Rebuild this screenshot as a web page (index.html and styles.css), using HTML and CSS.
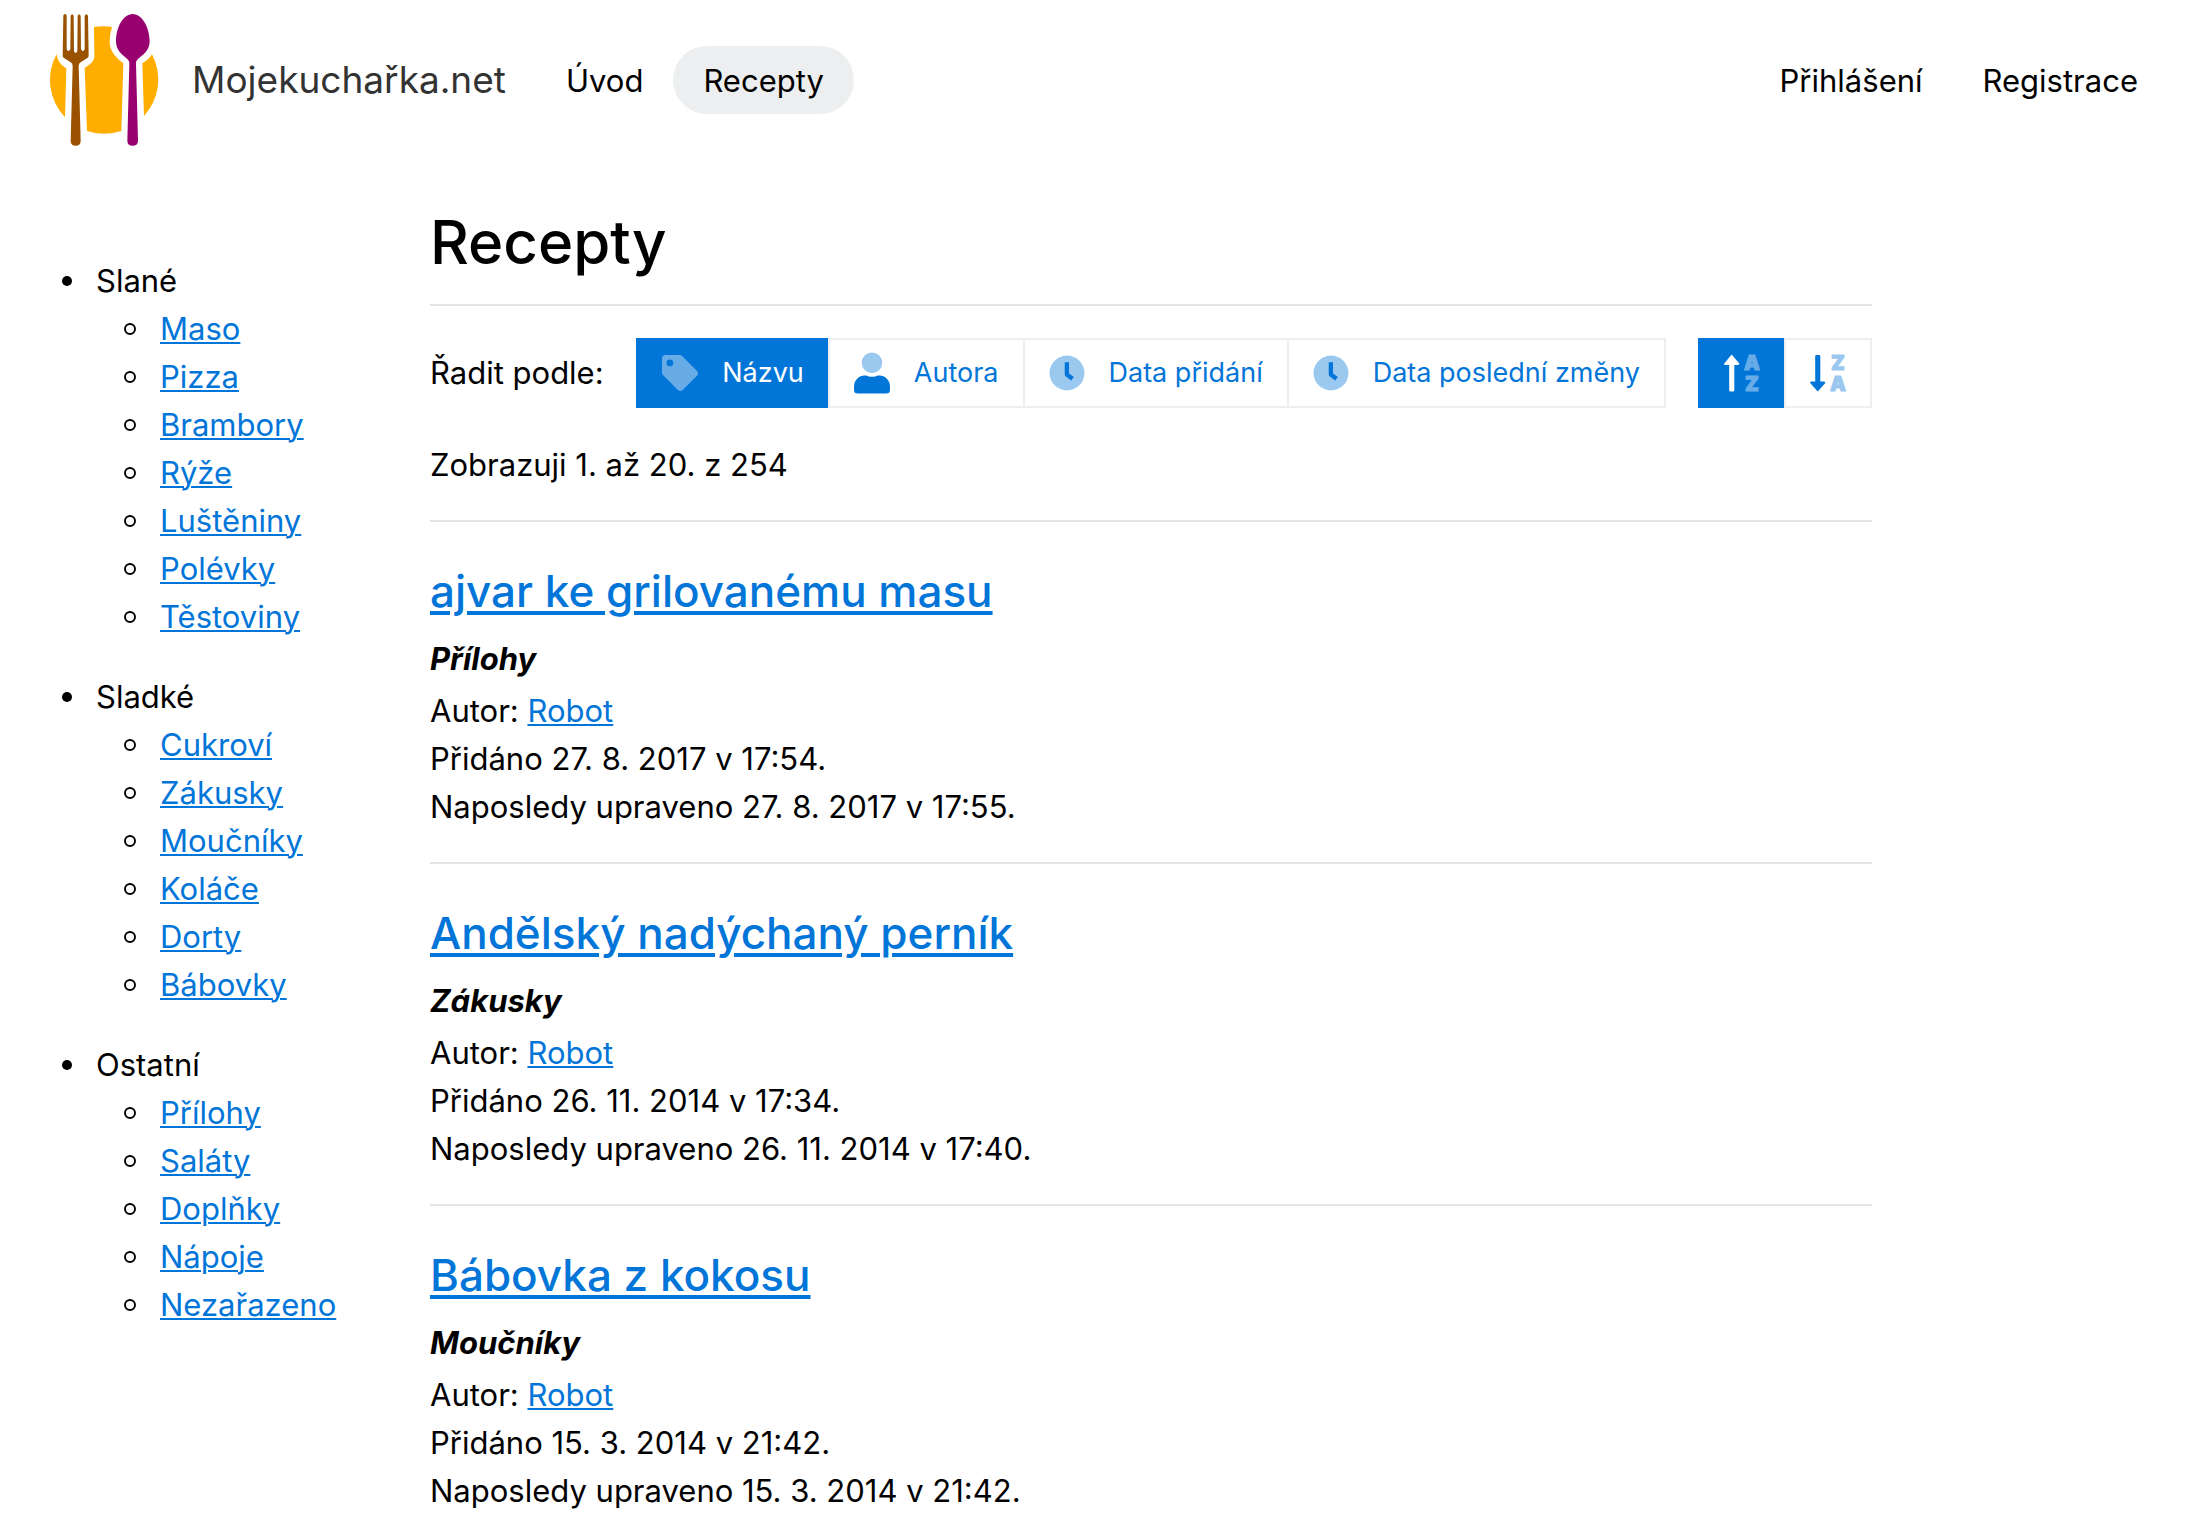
FILE: index.html
```html
<!DOCTYPE html>
<html lang="cs">
<head>
<meta charset="utf-8">
<meta name="viewport" content="width=device-width, initial-scale=1">
<title>Recepty – Mojekuchařka.net</title>
<link rel="stylesheet" href="styles.css">
</head>
<body>
<svg class="sprite" aria-hidden="true">
  <symbol id="clock" viewBox="0 0 512 512">
    <circle class="faded" cx="256" cy="256" r="248"/>
    <path d="M254 104V278L334 338" fill="none" stroke="currentColor" stroke-width="60" stroke-linejoin="round"/>
  </symbol>
</svg>

<header class="header">
  <a class="brand" href="#">
    <svg class="logo" viewBox="24 6 336 408" aria-hidden="true">
      <g fill="#ffae00">
        <path d="M50 132C52 152 62 164 79 175L75 322A162 162 0 0 1 50 132Z"/>
        <path d="M162 51Q190 46 216 51Q209 72 209 95C210 122 222 137 250 160L244 363Q192 380 141 363L134 174C155 160 163 152 163 138Z"/>
        <path d="M336 133C330 144 322 150 307 160L312 318A162 162 0 0 0 336 133Z"/>
      </g>
      <path fill="#9b5200" d="M75 12Q80 12 80 17L80 118Q85 128 91 118L92 17Q96 8 101 17L102 124Q107 134 112 124L113 17Q118 8 122 17L123 118Q129 128 134 118L134 17Q139 8 144 17L146 137Q146 141 142 144L122 157Q116 161 116 168L122 392Q122 407 107 407Q92 407 92 392L98 168Q98 161 92 157L72 144Q68 141 68 137L70 17Q70 12 75 12Z"/>
      <path fill="#99006f" d="M278 12C308 12 329 55 329 94C329 122 308 135 292 149Q288 153 288 160L294 392Q294 407 278 407Q262 407 262 392L268 160Q268 153 264 149C248 135 228 122 228 94C228 55 248 12 278 12Z"/>
    </svg>
    <span>Mojekuchařka.net</span>
  </a>
  <nav class="nav">
    <a class="nav-link" href="#">Úvod</a>
    <a class="nav-link active" href="#" aria-current="page">Recepty</a>
  </nav>
  <nav class="nav nav-user">
    <a class="nav-link" href="#">Přihlášení</a>
    <a class="nav-link" href="#">Registrace</a>
  </nav>
</header>

<div class="layout">
  <aside>
    <ul class="categories">
      <li>Slané
        <ul>
          <li><a href="#">Maso</a></li>
          <li><a href="#">Pizza</a></li>
          <li><a href="#">Brambory</a></li>
          <li><a href="#">Rýže</a></li>
          <li><a href="#">Luštěniny</a></li>
          <li><a href="#">Polévky</a></li>
          <li><a href="#">Těstoviny</a></li>
        </ul>
      </li>
      <li>Sladké
        <ul>
          <li><a href="#">Cukroví</a></li>
          <li><a href="#">Zákusky</a></li>
          <li><a href="#">Moučníky</a></li>
          <li><a href="#">Koláče</a></li>
          <li><a href="#">Dorty</a></li>
          <li><a href="#">Bábovky</a></li>
        </ul>
      </li>
      <li>Ostatní
        <ul>
          <li><a href="#">Přílohy</a></li>
          <li><a href="#">Saláty</a></li>
          <li><a href="#">Doplňky</a></li>
          <li><a href="#">Nápoje</a></li>
          <li><a href="#">Nezařazeno</a></li>
        </ul>
      </li>
    </ul>
  </aside>

  <main>
    <h1>Recepty</h1>
    <hr>
    <div class="toolbar">
      <span class="toolbar-label" id="sort-label">Řadit podle:</span>
      <div class="group group-sort" role="group" aria-labelledby="sort-label">
        <button class="btn active" type="button">
          <svg class="icon" viewBox="0 0 512 512" aria-hidden="true"><path class="faded" fill-rule="evenodd" d="M0 252V48C0 21 21 0 48 0h204a48 48 0 0 1 34 14l212 212c19 19 19 49 0 68L294 498c-19 19-49 19-68 0L14 286A48 48 0 0 1 0 252zM112 64a48 48 0 1 0 0 96a48 48 0 1 0 0-96z"/></svg>
          Názvu
        </button>
        <button class="btn" type="button">
          <svg class="icon icon-tall" viewBox="0 0 448 512" aria-hidden="true"><circle class="faded" cx="224" cy="128" r="128"/><path fill="currentColor" d="M314 288h-17c-22 10-47 16-73 16s-51-6-73-16h-17A134 134 0 0 0 0 422V464a48 48 0 0 0 48 48h352a48 48 0 0 0 48-48v-42A134 134 0 0 0 314 288z"/></svg>
          Autora
        </button>
        <button class="btn" type="button">
          <svg class="icon" aria-hidden="true"><use href="#clock"/></svg>
          Data přidání
        </button>
        <button class="btn" type="button">
          <svg class="icon" aria-hidden="true"><use href="#clock"/></svg>
          Data poslední změny
        </button>
      </div>
      <div class="group" role="group" aria-label="Směr řazení">
        <button class="btn active" type="button" aria-label="Vzestupně">
          <svg class="icon" viewBox="0 0 36 36" aria-hidden="true"><path fill="currentColor" d="M7.700 -.5L15.300 8.600Q15.500 10 14 10H10.300V35Q10.300 36.500 9 36.500H6.500Q5.200 36.500 5.200 35V10H1Q-.5 10 .2 8.600Z"/><g class="letters"><text x="28" y="15">A</text><text x="28" y="36">Z</text></g></svg>
        </button>
        <button class="btn" type="button" aria-label="Sestupně">
          <svg class="icon" viewBox="0 0 36 36" aria-hidden="true"><path fill="currentColor" d="M7.700 36.500L15.300 28Q15.500 26.500 14 26.500H10.300V1Q10.300 0 9 0H6.500Q5.200 0 5.200 1V26.500H1Q-.5 26.500 .2 28Z"/><g class="letters"><text x="28" y="15">Z</text><text x="28" y="36">A</text></g></svg>
        </button>
      </div>
    </div>
    <p class="summary">Zobrazuji 1. až 20. z 254</p>
    <hr>
    <article class="recipe">
      <h2><a href="#">ajvar ke grilovanému masu</a></h2>
      <h3>Přílohy</h3>
      <p>Autor: <a href="#">Robot</a></p>
      <p>Přidáno 27. 8. 2017 v 17:54.</p>
      <p>Naposledy upraveno 27. 8. 2017 v 17:55.</p>
    </article>
    <hr>
    <article class="recipe">
      <h2><a href="#">Andělský nadýchaný perník</a></h2>
      <h3>Zákusky</h3>
      <p>Autor: <a href="#">Robot</a></p>
      <p>Přidáno 26. 11. 2014 v 17:34.</p>
      <p>Naposledy upraveno 26. 11. 2014 v 17:40.</p>
    </article>
    <hr>
    <article class="recipe">
      <h2><a href="#">Bábovka z kokosu</a></h2>
      <h3>Moučníky</h3>
      <p>Autor: <a href="#">Robot</a></p>
      <p>Přidáno 15. 3. 2014 v 21:42.</p>
      <p>Naposledy upraveno 15. 3. 2014 v 21:42.</p>
    </article>
  </main>
</div>
</body>
</html>
```

FILE: styles.css
```css
:root {
  --blue: #0275d8;
  --line: #e5e5e5;
  --soft: #eceeef;
}

*,
*::before {
  box-sizing: border-box;
}

body {
  margin: 0;
  background: #fff;
  color: #000;
  font: 31px/48px Inter, "Liberation Sans", sans-serif;
}

a {
  color: var(--blue);
  text-decoration-thickness: 2px;
  text-underline-offset: 2px;
}

p,
h1,
h2,
h3,
ul {
  margin: 0;
}

hr {
  height: 2px;
  margin: 0;
  border: 0;
  background: var(--line);
}

.sprite {
  display: none;
}

.header {
  display: flex;
  align-items: center;
  height: 160px;
  padding: 0 32px 0 48px;
}

.brand {
  display: flex;
  align-items: center;
  gap: 32px;
  margin-right: 30px;
  color: #333;
  font-size: 37px;
  text-decoration: none;
}

.logo {
  width: 112px;
  height: 136px;
}

.nav {
  display: flex;
}

.nav-user {
  margin-left: auto;
}

.nav-link {
  padding: 11px 30px 9px;
  border-radius: 34px;
  color: #000;
  text-decoration: none;
}

.nav-link.active {
  background: var(--soft);
}

.layout {
  display: grid;
  grid-template-columns: 366px minmax(0, 1fr) 264px;
  gap: 32px;
  padding: 0 32px;
}

.categories {
  margin-top: 97px;
  padding-left: 64px;
}

.categories,
.categories ul {
  list-style: none;
}

.categories > li {
  margin-bottom: 32px;
}

.categories ul {
  padding-left: 64px;
}

.categories li::before {
  content: "";
  display: inline-block;
  width: 10px;
  height: 10px;
  margin: 0 24px 0 -34px;
  border-radius: 50%;
  background: #000;
  vertical-align: 6px;
}

.categories ul li::before {
  width: 12px;
  height: 12px;
  margin: 0 24px 0 -36px;
  border: 2px solid #000;
  background: none;
  vertical-align: 5px;
}

h1 {
  padding: 44px 0 24px;
  font-size: 60px;
  font-weight: 500;
  line-height: 76px;
}

.toolbar {
  display: flex;
  align-items: center;
  justify-content: space-between;
  gap: 32px;
  padding: 32px 0;
}

.toolbar-label {
  white-space: nowrap;
}

.group {
  display: flex;
}

.group-sort {
  margin-left: auto;
}

.btn {
  display: flex;
  align-items: center;
  gap: 24px;
  height: 70px;
  padding: 0 24px;
  border: 2px solid var(--soft);
  background: #fff;
  color: var(--blue);
  font: inherit;
  font-size: 27px;
  white-space: nowrap;
}

.btn + .btn {
  margin-left: -2px;
}

.btn.active {
  border-color: var(--blue);
  background: var(--blue);
  color: #fff;
}

.icon {
  width: 36px;
  height: 36px;
  overflow: visible;
}

.icon-tall {
  height: 42px;
}

.faded {
  fill: currentColor;
  opacity: 0.4;
}

.letters {
  fill: currentColor;
  stroke: currentColor;
  stroke-width: 1px;
  stroke-linejoin: round;
  opacity: 0.4;
  font-size: 20px;
  font-weight: 900;
  text-anchor: middle;
}

.summary {
  padding: 1px 0 31px;
}

.recipe {
  padding: 41px 0 31px;
}

h2 {
  margin-bottom: 20px;
  font-size: 44px;
  font-weight: 500;
  line-height: 56px;
}

h2 a {
  text-decoration-thickness: 4px;
  text-underline-offset: 4px;
}

h3 {
  margin-bottom: 8px;
  font-size: 31px;
  font-style: italic;
  font-weight: 700;
  line-height: 40px;
}
```
